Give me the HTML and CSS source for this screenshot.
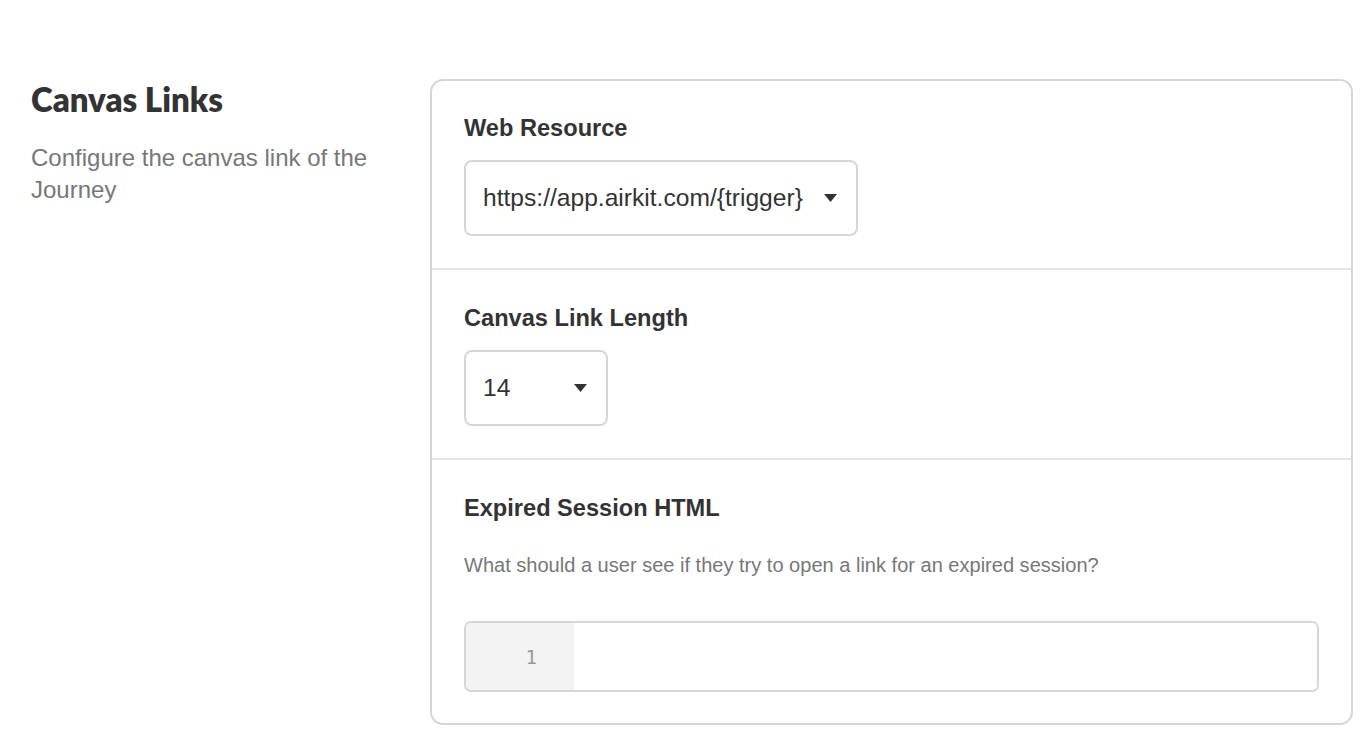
FILE: index.html
```html
<!DOCTYPE html>
<html>
<head>
<meta charset="utf-8">
<link rel="stylesheet" href="styles.css">
</head>
<body>
<div class="page">
  <aside class="intro">
    <h1 class="intro-title">Canvas Links</h1>
    <p class="intro-text">Configure the canvas link of the Journey</p>
  </aside>
  <section class="card">
    <div class="field">
      <div class="field-label">Web Resource</div>
      <div class="select select-wide">
        <span class="select-value">https://app.airkit.com/{trigger}</span>
        <svg class="caret" width="13" height="8" viewBox="0 0 13 8"><path d="M0 0 H13 L6.5 8 Z" fill="#333"/></svg>
      </div>
    </div>
    <div class="field">
      <div class="field-label">Canvas Link Length</div>
      <div class="select select-narrow">
        <span class="select-value">14</span>
        <svg class="caret" width="13" height="8" viewBox="0 0 13 8"><path d="M0 0 H13 L6.5 8 Z" fill="#333"/></svg>
      </div>
    </div>
    <div class="field">
      <div class="field-label">Expired Session HTML</div>
      <p class="field-help">What should a user see if they try to open a link for an expired session?</p>
      <div class="editor">
        <div class="gutter">1</div>
        <div class="code"></div>
      </div>
    </div>
  </section>
</div>
</body>
</html>
```

FILE: styles.css
```css
* { box-sizing: border-box; }
html, body { margin: 0; padding: 0; background: #fff; }
body { font-family: "Liberation Sans", Arial, Helvetica, sans-serif; color: #333; }

.page {
  display: flex;
  align-items: flex-start;
  padding: 79px 17px 0 31px;
}

.intro {
  width: 399px;
  flex: none;
}
.intro-title {
  margin: 2px 0 0;
  font-family: Lato, "Liberation Sans", sans-serif;
  font-weight: 800;
  font-size: 33px;
  line-height: 36px;
  color: #333;
}
.intro-text {
  margin: 25px 0 0;
  font-size: 24px;
  line-height: 32px;
  color: #777;
  width: 360px;
}

.card {
  flex: 1;
  border: 2px solid #d6d6d6;
  border-radius: 13px;
}

.field {
  padding: 32px 32px 32px 32px;
  border-top: 2px solid #e4e4e4;
}
.field:first-child { border-top: none; }
.field:not(:first-child) { padding-top: 33px; }
.field:last-child { padding-bottom: 31px; }

.field-label {
  font-weight: 700;
  font-size: 23.6px;
  line-height: 30px;
  color: #333;
}

.select {
  margin-top: 17px;
  height: 76px;
  border: 2px solid #d6d6d6;
  border-radius: 8px;
  display: flex;
  align-items: center;
  padding: 0 19px 0 17px;
  font-size: 24.6px;
  color: #333;
}
.select-value { flex: 1; white-space: nowrap; }
.select-wide { width: 394px; }
.select-narrow { width: 144px; }
.caret { flex: none; margin-left: 14px; }

.field-help {
  margin: 28px 0 0;
  font-size: 20.05px;
  line-height: 28px;
  color: #777;
}

.editor {
  margin-top: 42px;
  height: 71px;
  border: 2px solid #d6d6d6;
  border-radius: 7px;
  display: flex;
  overflow: hidden;
}
.gutter {
  width: 108px;
  background: #f3f3f3;
  display: flex;
  align-items: center;
  justify-content: flex-end;
  padding-right: 37px;
  font-family: "DejaVu Sans Mono", "Liberation Mono", monospace;
  font-size: 19px;
  color: #999;
}
.code { flex: 1; background: #fff; }
```
